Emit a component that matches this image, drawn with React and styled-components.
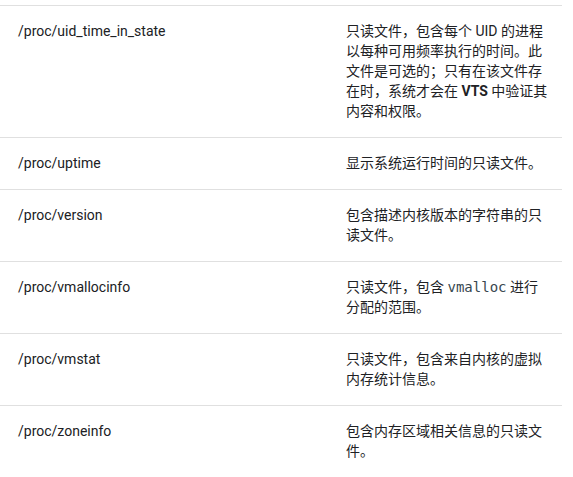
import React from "react";
import styled, { createGlobalStyle } from "styled-components";

const GlobalStyle = createGlobalStyle`
  html, body {
    margin: 0;
    padding: 0;
    background: #fff;
  }
  body {
    font-family: Roboto, "Noto Sans CJK SC", "Noto Sans", sans-serif;
    font-size: 14px;
    line-height: 20px;
    color: #202124;
  }
`;

const rows = [
  {
    path: "/proc/uid_time_in_state",
    desc: (
      <>
        只读文件，包含每个 UID 的进程以每种可用频率执行的时间。此文件是可选的；只有在该文件存在时，系统才会在 <b>VTS</b> 中验证其内容和权限。
      </>
    ),
  },
  { path: "/proc/uptime", desc: "显示系统运行时间的只读文件。" },
  { path: "/proc/version", desc: "包含描述内核版本的字符串的只读文件。" },
  {
    path: "/proc/vmallocinfo",
    desc: (
      <>
        只读文件，包含 <Code>vmalloc</Code> 进行分配的范围。
      </>
    ),
  },
  { path: "/proc/vmstat", desc: "只读文件，包含来自内核的虚拟内存统计信息。" },
  { path: "/proc/zoneinfo", desc: "包含内存区域相关信息的只读文件。" },
];

const App = () => {
  return (
    <>
      <GlobalStyle />
      <Table>
        <colgroup>
          <col style={{ width: 330 }} />
          <col />
        </colgroup>
        <tbody>
          {rows.map((r) => (
            <Row key={r.path}>
              <PathCell>{r.path}</PathCell>
              <DescCell>{r.desc}</DescCell>
            </Row>
          ))}
        </tbody>
      </Table>
    </>
  );
};

function Code({ children }) {
  return <CodeText>{children}</CodeText>;
}

const Table = styled.table`
  width: 562px;
  margin-top: 5px;
  border-collapse: collapse;
  table-layout: fixed;
`;

const Row = styled.tr`
  td {
    border-top: 1px solid #e0e0e0;
    padding: 15px 16px 16px;
    vertical-align: top;
    word-break: break-all;
  }
`;

const PathCell = styled.td`
  && {
    padding-left: 18px;
  }
`;

const DescCell = styled.td`
  && {
    padding-right: 11px;
  }
  b {
    font-weight: 700;
  }
`;

const CodeText = styled.code`
  font-family: "DejaVu Sans Mono", "Liberation Mono", monospace;
  font-size: 14px;
  line-height: 1;
  color: #37474f;
`;

export default App;
